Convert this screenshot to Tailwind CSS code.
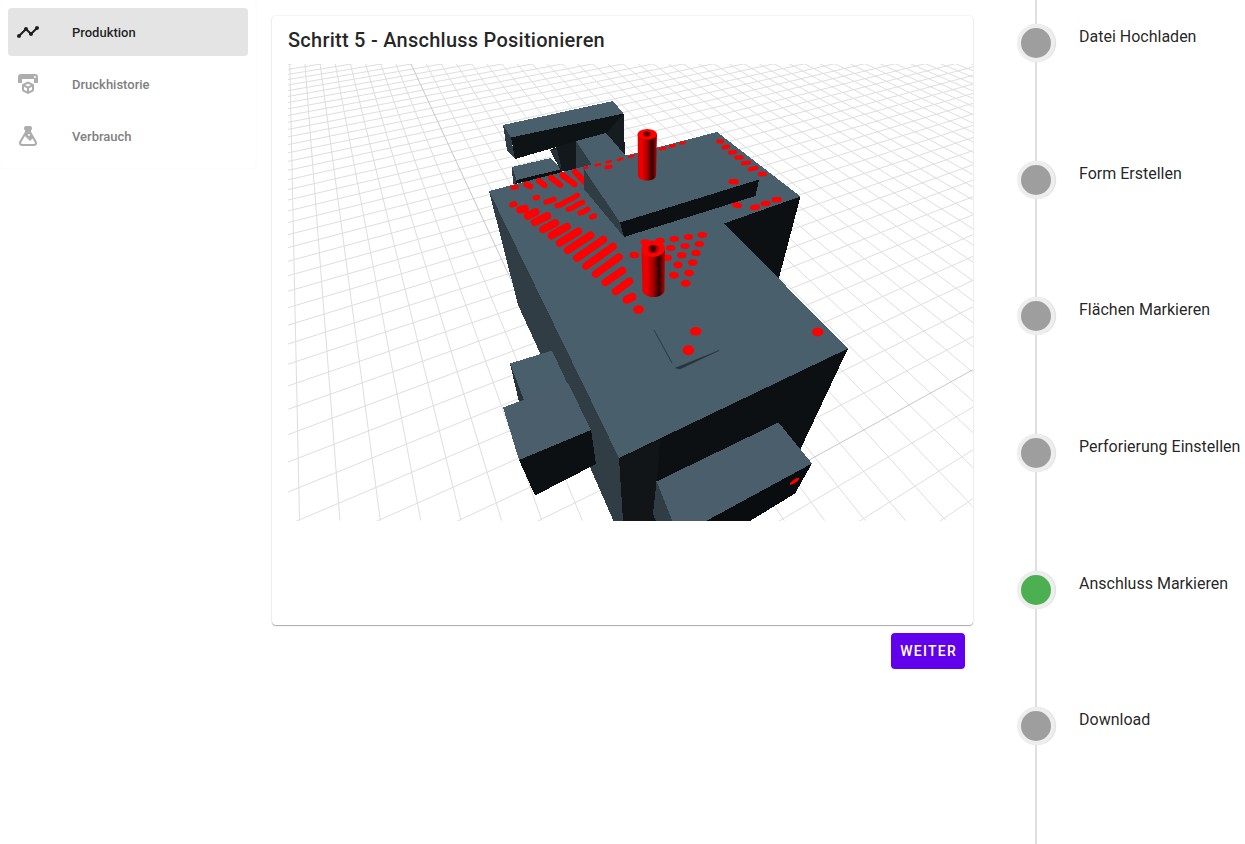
<!DOCTYPE html>
<html lang="de">
<head>
<meta charset="utf-8">
<meta name="viewport" content="width=device-width, initial-scale=1">
<title>Anschluss Positionieren</title>
<script src="https://cdn.jsdelivr.net/npm/@tailwindcss/browser@4"></script>
</head>
<body class="flex min-h-screen items-start bg-white font-['Roboto',sans-serif] text-black/87">

<aside class="w-64 shrink-0 rounded p-2 shadow-[0_0_2px_rgba(0,0,0,0.05)]">
  <nav class="flex flex-col gap-1 text-[13px] font-medium">
    <a href="#" class="flex h-12 items-center gap-8 rounded bg-[#e4e4e4] px-2">
      <svg class="size-6" viewBox="0 0 24 24" fill="currentColor"><path d="M23 8c0 1.1-.9 2-2 2-.18 0-.35-.02-.51-.07l-3.56 3.55c.05.16.07.34.07.52 0 1.1-.9 2-2 2s-2-.9-2-2c0-.18.02-.36.07-.52l-2.55-2.55c-.16.05-.34.07-.52.07s-.36-.02-.52-.07l-4.55 4.56c.05.16.07.33.07.51 0 1.1-.9 2-2 2s-2-.9-2-2 .9-2 2-2c.18 0 .35.02.51.07l4.56-4.55C8.02 9.36 8 9.18 8 9c0-1.1.9-2 2-2s2 .9 2 2c0 .18-.02.36-.07.52l2.55 2.55c.16-.05.34-.07.52-.07s.36.02.52.07l3.55-3.56C19.02 8.35 19 8.18 19 8c0-1.1.9-2 2-2s2 .9 2 2z"/></svg>
      <span class="pt-0.5">Produktion</span>
    </a>
    <a href="#" class="flex h-12 items-center gap-8 rounded px-2 text-[#808080]">
      <svg class="size-6 text-[#adadad]" viewBox="0 0 24 24" fill="currentColor"><path d="M19,6A1,1 0 0,0 20,5A1,1 0 0,0 19,4A1,1 0 0,0 18,5A1,1 0 0,0 19,6M19,2A3,3 0 0,1 22,5V11H18V7H6V11H2V5A3,3 0 0,1 5,2H19M18,18.25C18,18.63 17.79,18.96 17.47,19.13L12.57,21.82C12.4,21.94 12.21,22 12,22C11.79,22 11.59,21.94 11.43,21.82L6.53,19.13C6.21,18.96 6,18.63 6,18.25V13C6,12.62 6.21,12.29 6.53,12.12L11.43,9.68C11.59,9.56 11.79,9.5 12,9.5C12.21,9.5 12.4,9.56 12.57,9.68L17.47,12.12C17.79,12.29 18,12.62 18,13V18.25M12,11.65L9.04,13L12,14.6L14.96,13L12,11.65M8,17.66L11,19.29V16.33L8,14.71V17.66M16,17.66V14.71L13,16.33V19.29L16,17.66Z"/></svg>
      <span class="pt-0.5">Druckhistorie</span>
    </a>
    <a href="#" class="flex h-12 items-center gap-8 rounded px-2 text-[#808080]">
      <svg class="size-6 text-[#adadad]" viewBox="0 0 24 24" fill="currentColor"><path d="M6,22A3,3 0 0,1 3,19C3,18.4 3.18,17.84 3.5,17.37L9,7.81V6A1,1 0 0,1 8,5V4A2,2 0 0,1 10,2H14A2,2 0 0,1 16,4V5A1,1 0 0,1 15,6V7.81L20.5,17.37C20.82,17.84 21,18.4 21,19A3,3 0 0,1 18,22H6M5,19A1,1 0 0,0 6,20H18A1,1 0 0,0 19,19C19,18.79 18.93,18.59 18.82,18.43L16.53,14.47L14,17L8.93,11.93L5.18,18.43C5.07,18.59 5,18.79 5,19M13,10A1,1 0 0,0 12,11A1,1 0 0,0 13,12A1,1 0 0,0 14,11A1,1 0 0,0 13,10Z"/></svg>
      <span class="pt-0.5">Verbrauch</span>
    </a>
  </nav>
</aside>

<main class="flex min-w-0 flex-1 flex-col p-4">
  <section class="rounded pt-2 pb-[104px] pl-4 shadow-[0_1px_1px_rgba(0,0,0,0.3),0_0_2px_rgba(0,0,0,0.15)]">
    <h1 class="mb-2 text-xl leading-8 font-medium tracking-[0.0125em]">Schritt 5 - Anschluss Positionieren</h1>
    <svg class="block w-full" viewBox="288 64 685 457" role="img" aria-label="3D-Vorschau der Form">
      <defs>
        <linearGradient id="tube"><stop offset="0" stop-color="#e00000"/><stop offset=".2" stop-color="#f00000"/><stop offset=".5" stop-color="#a80000"/><stop offset=".75" stop-color="#2c0000"/><stop offset=".9" stop-color="#8a0000"/><stop offset="1" stop-color="#c00000"/></linearGradient>
      </defs>
      <path id="grid" fill="none" stroke="#dedede"/>
      <path id="axes" fill="none" stroke="#c8c8c8"/>

      <!-- rear bar and its supports -->
      <g shape-rendering="crispEdges">
        <path fill="#4a5f6c" d="M512 167 551 158 562 170 517 181Z"/>
        <path fill="#2f3c44" d="M512 167 517 181 515 185 513 184Z"/>
        <path fill="#0c1012" d="M517 180 562 169V173L515 184Z"/>
        <path fill="#12181b" d="M550 150 577 138V171H561Z"/>
        <path fill="#253037" d="M550 150 557 149 562 171Z"/>
        <path fill="#0e1315" d="M511 137 623.500 113.500 625 156 606 134 577 141 515 159Z"/>
        <path fill="#161d21" d="M616 122 623.500 114 625 156 606 134Z"/>
        <path fill="#4a5f6c" d="M503 125 613 101 623.500 113.500 511 137.500Z"/>
        <path fill="#2f3c44" d="M503 125 511 137.500 515 159 507 150Z"/>
        <path fill="#303d45" d="M576 141 592 165 576 170Z"/>
        <path fill="#4a5f6c" d="M576 141 606 133 626 156 592 165Z"/>
      </g>

      <g shape-rendering="crispEdges">
        <!-- body -->
        <path fill="#303d45" d="M489 191 619 458 624 521H613.500L540 353 518 305Z"/>
        <path fill="#0c1012" d="M619 458 848 348.500 801 448 750 521H623Z"/>
        <path fill="#111518" d="M619 458 660 440 654 521H623Z"/>
        <path fill="#0c1012" d="M800.500 196.500 723 223 779 278Z"/>
        <path fill="#4a5f6c" d="M489 191 717 132 800.500 196.500 724 223.500 848 348.500 619 458Z"/>

        <!-- left lugs -->
        <path fill="#4a5f6c" d="M510 363.500 552 350.500 568 385 524 401Z"/>
        <path fill="#27333a" d="M510 363.500 524 400 519 402Z"/>
        <path fill="#4b5e6c" d="M503 407.500 568 383 591 430 519 460Z"/>
        <path fill="#0c1012" d="M519 460 591 430 596 464 535 495.500Z"/>

        <!-- front lug -->
        <path fill="#303d45" d="M656.500 481.500 673 521H656L653 514Z"/>
        <path fill="#0a0d0f" d="M812 463.500 795 493.500 750 521H706Z"/>
        <path fill="#4b5e6c" d="M656.500 481.500 778.500 422.500 812 463.500 706 521H672.500Z"/>
      </g>
      <path fill="#27333a" d="M654 330 672 363 671 361ZM675.500 368 719 350.500 680 369Z" stroke="#27333a" stroke-width=".5"/>
      <ellipse cx="794.500" cy="481.300" rx="5.500" ry="1.600" fill="#f00" transform="rotate(-34 794.500 481.300)"/>

      <!-- perforation slots -->
      <g fill="none" stroke="#f00" stroke-width="23" stroke-linecap="round" transform="translate(490 180) scale(.3333)">
        <path stroke-width="17" d="M66 74 74 72"/>
        <path d="M90 89 105 86M113 108 137 96M134 127 172 108M159 148 196 129M184 167 231 140M209 189 265 154M233 211 302 166M261 234 340 179M288 258 369 200M317 282 387 231M346 307 397 272M377 334 418 304"/>
        <path stroke-width="25" d="M410 359 427 351"/>
        <path stroke-width="15" d="M135 54 143 52"/>
        <path stroke-width="16" d="M168 66 176 64 192 58M201 77 212 74 228 64 245 57 262 46M235 88 247 84 262 74 278 67M270 99 280 96 293 88M305 111 313 108"/>
      </g>
      <g fill="none" stroke="#f00" stroke-width="18" stroke-linecap="round" transform="translate(480 90) scale(.3333)">
        <path stroke-width="14" d="M98 293 110 291"/>
        <path d="M139 283 151 289M177 273 194 286M213 263 241 285M247 255 284 283M285 246 318 280"/>
        <path stroke-width="8" d="M313 235 322 232M347 226 360 223M380 217 392 214M414 210 426 206M447 201 460 197M542 177 555 174M570 169 583 167"/>
        <path stroke-width="12" d="M379 232 392 230"/>
      </g>
      <g fill="none" stroke="#f00" stroke-linecap="round" transform="translate(640 110) scale(.3333)">
        <path stroke-width="9" d="M61 117 75 114M91 108 103 106M121 100 133 98"/>
        <path stroke-width="13" d="M235 94 246 94M251 112 264 110M270 128 285 126M289 143 305 142M309 160 327 158M330 178 349 174M360 192 374 192"/>
        <path stroke-width="16" d="M274 215 288 215M284 284 298 287M338 293 352 291M370 281 384 280M403 269 417 269"/>
      </g>
      <g id="holes" fill="#f00"></g>

      <!-- raised plate -->
      <g shape-rendering="crispEdges">
        <path fill="#303d45" d="M584 169 620 222.500 624 237 584 189Z"/>
        <path fill="#0c1012" d="M620 222.500 759 179.500 755.500 196 624 237Z"/>
      </g>

      <!-- connector tubes -->
      <g>
        <path fill="url(#tube)" d="M637.700 134 638 176C639 182 655 182 656 176L657 134Z"/>
        <ellipse cx="647.300" cy="134.300" rx="9.700" ry="5.300" fill="#f00"/>
        <ellipse cx="647" cy="134" rx="4" ry="2.800" fill="#a00000"/>
        <path fill="#500000" d="M644.500 132.500Q650 131 649 134.500 648 137 646 136Z"/>
        <path fill="url(#tube)" d="M641.500 249 642.500 291C645 299 662 299 664.500 291L665 249Z"/>
        <ellipse cx="653.200" cy="248.700" rx="11.700" ry="8.200" fill="#f00"/>
        <ellipse cx="653.300" cy="249" rx="5.600" ry="4.200" fill="#a80000"/>
        <path fill="#400000" d="M650 246Q656 244 656 249 655 252 651.500 252.500Z"/>
      </g>
    </svg>
  </section>
  <button type="button" class="mt-2 mr-2 h-9 self-end rounded bg-[#6200ee] pr-2 pl-[9px] text-sm font-medium tracking-[0.09em] text-white uppercase">Weiter</button>
</main>

<ol class="relative grid h-screen w-64 shrink-0 grid-rows-6 pt-6 pl-7 leading-[26px] before:absolute before:inset-y-0 before:left-[46px] before:w-0.5 before:bg-[#e0e0e0]">
  <li class="relative flex items-start gap-6 whitespace-nowrap"><span class="size-[38px] shrink-0 rounded-full border-4 border-[#eeeeee] bg-[#9e9e9e] shadow-[1px_0_1px_rgba(0,0,0,0.15)]"></span>Datei Hochladen</li>
  <li class="relative flex items-start gap-6 whitespace-nowrap"><span class="size-[38px] shrink-0 rounded-full border-4 border-[#eeeeee] bg-[#9e9e9e] shadow-[1px_0_1px_rgba(0,0,0,0.15)]"></span>Form Erstellen</li>
  <li class="relative flex items-start gap-6 whitespace-nowrap"><span class="size-[38px] shrink-0 rounded-full border-4 border-[#eeeeee] bg-[#9e9e9e] shadow-[1px_0_1px_rgba(0,0,0,0.15)]"></span>Flächen Markieren</li>
  <li class="relative flex items-start gap-6 whitespace-nowrap"><span class="size-[38px] shrink-0 rounded-full border-4 border-[#eeeeee] bg-[#9e9e9e] shadow-[1px_0_1px_rgba(0,0,0,0.15)]"></span>Perforierung Einstellen</li>
  <li class="relative flex items-start gap-6 whitespace-nowrap" aria-current="step"><span class="size-[38px] shrink-0 rounded-full border-4 border-[#eeeeee] bg-[#4caf50] shadow-[1px_0_1px_rgba(0,0,0,0.15)]"></span>Anschluss Markieren</li>
  <li class="relative flex items-start gap-6 whitespace-nowrap"><span class="size-[38px] shrink-0 rounded-full border-4 border-[#eeeeee] bg-[#9e9e9e] shadow-[1px_0_1px_rgba(0,0,0,0.15)]"></span>Download</li>
</ol>

<script>
  // Floor grid in perspective: two line families, each running to its vanishing point.
  const vpA = [284, -210], vpB = [2023, -210];
  let grid = '', axes = '';
  for (let k = 0; k <= 48; k++) {
    const seg = `M${299.5 + 40.4 * k} 520.500L${vpA}`;
    if (k === 8) axes += seg; else grid += seg;
  }
  for (let n = -5; n <= 43; n++) {
    const seg = `M288 ${-210 + 1 / (0.0010441 + 0.0000634 * n)}L${vpB}`;
    if (n === 0) axes += seg; else grid += seg;
  }
  document.getElementById('grid').setAttribute('d', grid);
  document.getElementById('axes').setAttribute('d', axes);

  // Single perforation holes: centre x, centre y, radius x, radius y
  const holes = [
    [645.3,242.3,4.7,3],[660,240.8,4.7,3],[674.3,239,4.7,3],[688.3,237,4.7,3],[702.3,235,4.7,3],
    [670.7,248,4.7,3],[685,246,4.7,3],[699.3,244,4.7,3],[667.3,257.7,4.7,3.2],[681.7,255.3,4.7,3.2],[696,253,4.7,3.2],
    [678,265,4.8,3.4],[692.7,262.7,4.8,3.4],[674,275.3,4.9,3.5],[689,273,4.9,3.5],[685.7,283.3,5,3.6],
    [634.3,255,4.8,3.3],[638.5,309.5,5.3,4.2],[695.7,331.3,5.8,4.3],[688.3,350.3,5.7,5],[817.7,332,5.8,4.2]
  ];
  document.getElementById('holes').innerHTML = holes.map(([x, y, a, b]) =>
    `<ellipse cx="${x}" cy="${y}" rx="${a}" ry="${b}"/>`).join('');
</script>
</body>
</html>
